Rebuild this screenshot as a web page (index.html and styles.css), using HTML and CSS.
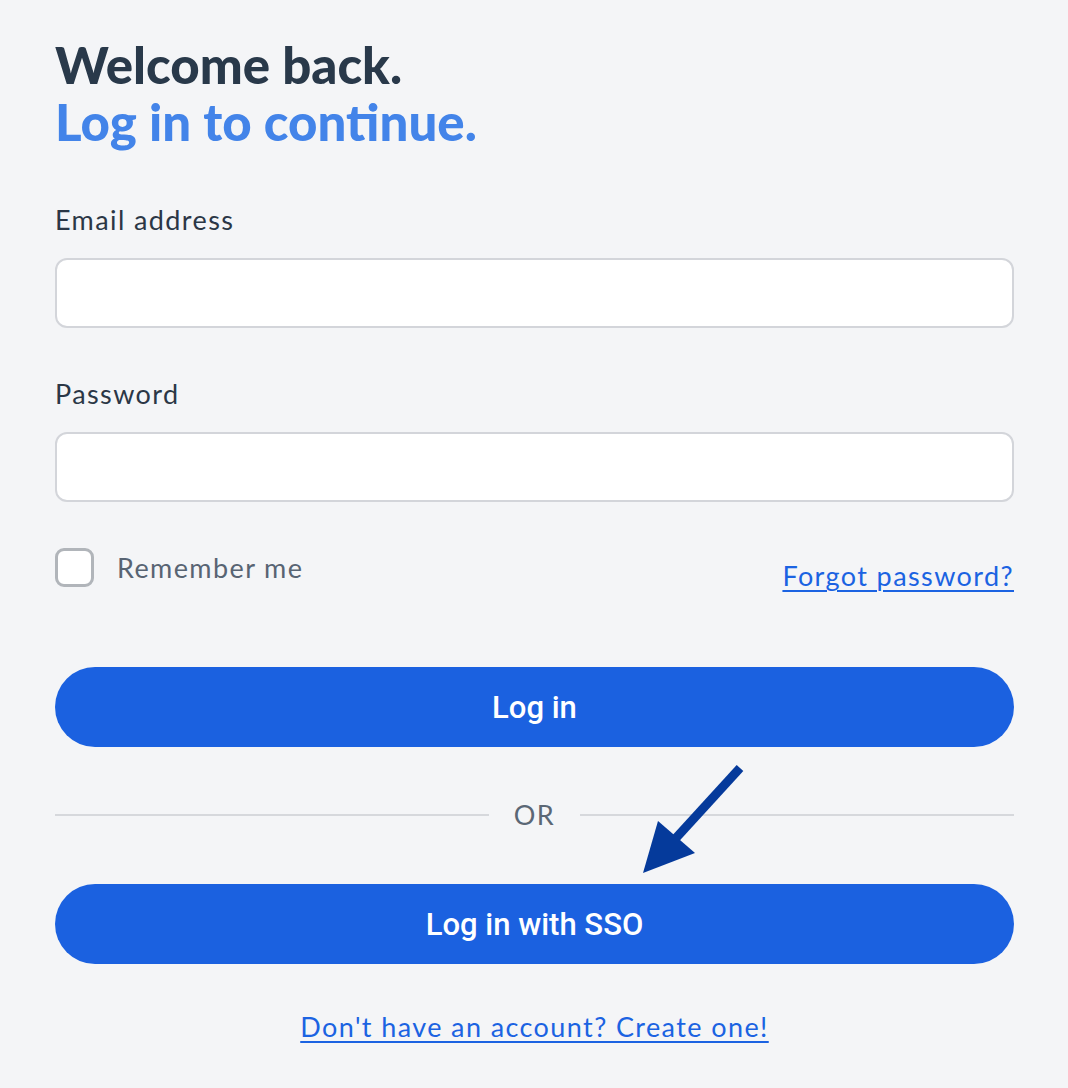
FILE: index.html
```html
<!DOCTYPE html>
<html lang="en">
<head>
  <meta charset="UTF-8" />
  <meta name="viewport" content="width=device-width, initial-scale=1.0" />
  <title>Log in</title>
  <link rel="stylesheet" href="styles.css">
</head>
<body>
  <main class="login">
    <h1 class="login-title">
      <span class="title-main">Welcome back.</span>
      <span class="title-sub">Log in to continue.</span>
    </h1>

    <form class="login-form" onsubmit="event.preventDefault()">
      <div class="form-group">
        <label for="email">Email address</label>
        <input type="email" id="email" name="email">
      </div>

      <div class="form-group form-group-last">
        <label for="password">Password</label>
        <input type="password" id="password" name="password">
      </div>

      <div class="form-options">
        <label class="remember">
          <input type="checkbox" name="remember">
          <span>Remember me</span>
        </label>
        <a href="#" class="link">Forgot password?</a>
      </div>

      <button type="submit" class="btn-primary">Log in</button>

      <div class="divider"><span>OR</span></div>

      <div class="sso-wrap">
        <!-- pointer towards the SSO button -->
        <svg class="sso-arrow" width="110" height="120" viewBox="0 0 110 120">
          <line x1="98" y1="4" x2="34" y2="74" stroke="#053a9b" stroke-width="9" />
          <polygon points="16,57 53,89 1,109" fill="#053a9b" />
        </svg>
        <button type="button" class="btn-primary">Log in with SSO</button>
      </div>
    </form>

    <p class="signup"><a href="#" class="link">Don't have an account? Create one!</a></p>
  </main>
</body>
</html>
```

FILE: styles.css
```css
body {
  margin: 0;
  background-color: #f4f5f7;
  font-family: Lato, "Open Sans", sans-serif;
  color: #2b3746;
}

.login {
  padding: 36px 54px 0 55px;
}

.login-title {
  margin: 0 0 55px;
  font-size: 51px;
  line-height: 57px;
  font-weight: 900;
}

.login-title span {
  display: block;
}

.title-main {
  color: #29394a;
}

.title-sub {
  color: #4384e9;
}

.form-group {
  margin-bottom: 51px;
}

.form-group-last {
  margin-bottom: 0;
}

.form-group label {
  display: block;
  font-size: 27px;
  line-height: 30px;
  letter-spacing: 1.4px;
  margin-bottom: 23px;
  color: #2b3746;
}

.form-group input {
  display: block;
  box-sizing: border-box;
  width: 100%;
  height: 70px;
  border: 2px solid #d3d5da;
  border-radius: 12px;
  background: #fff;
  font-size: 22px;
  padding: 0 18px;
}

.form-options {
  display: flex;
  justify-content: space-between;
  align-items: flex-start;
  margin-top: 46px;
}

.remember {
  display: flex;
  align-items: center;
  gap: 23px;
  font-size: 27px;
  letter-spacing: 1.4px;
  color: #586473;
}

.remember input {
  appearance: none;
  margin: 0;
  width: 39px;
  height: 39px;
  box-sizing: border-box;
  border: 3px solid #b1b5ba;
  border-radius: 9px;
  background: #fff;
}

.link {
  color: #1b63e2;
  font-size: 27px;
  line-height: 30px;
  letter-spacing: 1.4px;
  text-decoration: underline;
  text-decoration-thickness: 2px;
  text-underline-offset: 4px;
}

.form-options .link {
  margin-top: 13px;
}

.btn-primary {
  display: block;
  width: 100%;
  height: 80px;
  border: none;
  border-radius: 40px;
  background-color: #1b61e0;
  color: #fff;
  font-family: Roboto, sans-serif;
  font-size: 31px;
  font-weight: 500;
  cursor: pointer;
}

.form-options + .btn-primary {
  margin-top: 76px;
}

.divider {
  display: flex;
  align-items: center;
  gap: 25px;
  margin: 53px 0 54px;
  color: #5b6775;
  font-size: 27px;
  line-height: 30px;
  letter-spacing: 1.4px;
}

.divider::before,
.divider::after {
  content: "";
  flex: 1;
  height: 2px;
  background-color: #d6d8dc;
}

.sso-wrap {
  position: relative;
}

.sso-arrow {
  position: absolute;
  left: 587px;
  top: -120px;
}

.signup {
  text-align: center;
  margin: 48px 0 0;
  line-height: 30px;
}
```
